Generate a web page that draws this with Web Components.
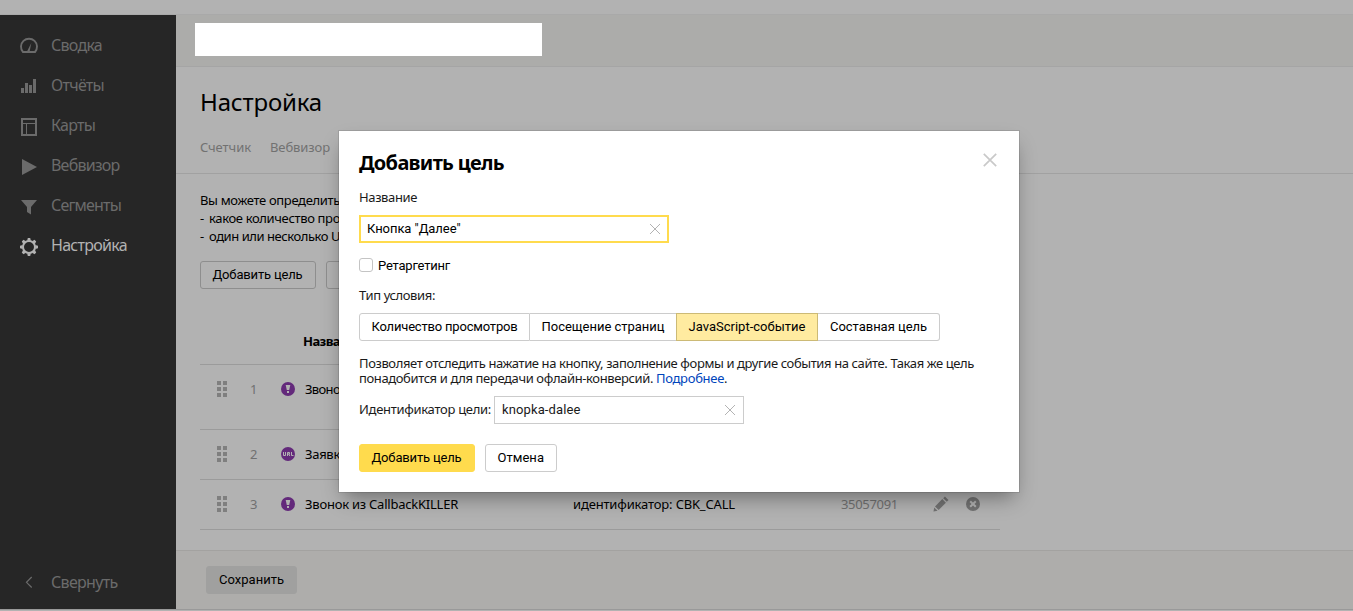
<!DOCTYPE html>
<html lang="ru">
<head>
<meta charset="utf-8">
<title>Настройка</title>
<style>
  body {
    margin: 0;
    background: #b2b2b2;
    font: 13px/18px "Noto Sans", sans-serif;
    color: #000;
    overflow: hidden;
  }
</style>
</head>
<body>
<metrika-app>
  <side-menu slot="menu">
    <side-item icon="gauge"><ui-text w="51">Сводка</ui-text></side-item>
    <side-item icon="bars"><ui-text w="53">Отчёты</ui-text></side-item>
    <side-item icon="layout"><ui-text w="44">Карты</ui-text></side-item>
    <side-item icon="play"><ui-text w="68.5">Вебвизор</ui-text></side-item>
    <side-item icon="funnel"><ui-text w="70">Сегменты</ui-text></side-item>
    <side-item icon="gear" active><ui-text w="76">Настройка</ui-text></side-item>
    <side-item slot="bottom" icon="chevron"><ui-text w="66.5">Свернуть</ui-text></side-item>
  </side-menu>
  <settings-page></settings-page>
  <goal-dialog slot="dialog"></goal-dialog>
</metrika-app>

<script>
const icons = {
  gauge: '<svg width="20" height="20"><path d="M4 16 H16 A8 8 0 1 0 4 16 Z" fill="none" stroke="currentColor" stroke-width="1.9"/><path d="M12.3 7 L10.6 15.5 H8 Z" fill="currentColor"/></svg>',
  bars: '<svg width="20" height="20" fill="currentColor"><path d="M2 12h3v5H2zM6 7h3v10H6zM10 9h3v8h-3zM14 3h3v14h-3z"/></svg>',
  layout: '<svg width="20" height="20"><path d="M3 3h14v16H3z" fill="none" stroke="currentColor" stroke-width="2"/><path d="M3 7.5h14M7.5 7v12" stroke="currentColor" fill="none"/></svg>',
  play: '<svg width="20" height="20"><path d="M3 3 L18 11 L3 19 Z" fill="currentColor"/></svg>',
  funnel: '<svg width="20" height="20"><path d="M2 4 H18 L12 11 V18.5 L8 16 V11 Z" fill="currentColor"/></svg>',
  gear: '<svg width="20" height="20" viewBox="-10 -11 20 20"><circle r="6" fill="none" stroke="currentColor" stroke-width="2"/><g fill="currentColor">' +
    [0, 45, 90, 135, 180, 225, 270, 315].map(a => `<path transform="rotate(${a})" d="M-1.9 -6.3 L-1.2 -9 H1.2 L1.9 -6.3 Z"/>`).join("") + '</g></svg>',
  chevron: '<svg width="20" height="20"><path d="M12.7 4 L7.5 9.3 L12.7 14.5" fill="none" stroke="currentColor" stroke-width="1.2"/></svg>',
  event: '<svg width="14" height="14"><circle cx="7" cy="7" r="7" fill="#63297b"/><path d="M4.7 3h4.6L8.2 8H5.8zM6 9h2v2H6z" fill="#b2b2b2"/></svg>',
  url: '<svg width="14" height="14"><circle cx="7" cy="7" r="7" fill="#63297b"/><path d="M2.5 5v3.5h2V5M6.5 9V5.5h2V7h-2M7.8 7L8.8 9M10.5 5v3.5h2" fill="none" stroke="#b2b2b2"/></svg>',
  drag: '<svg width="10" height="16" fill="#7f7f7f"><path d="M0 0h4v4H0zM6 0h4v4H6zM0 6h4v4H0zM6 6h4v4H6zM0 12h4v4H0zM6 12h4v4H6z"/></svg>',
  pencil: '<svg width="16" height="16" fill="#727272"><path d="M10.2 2.2 L11.9 .5 L15.5 4.1 L13.8 5.8 Z"/><path d="M9.3 3.1 L12.9 6.7 L5.6 14 L2 10.4 Z"/><path d="M1.2 11.4 L4.6 14.8 L.5 15.4 Z"/></svg>',
  remove: '<svg width="14" height="14"><circle cx="7" cy="7" r="7" fill="#727272"/><path d="M4.2 4.2l5.6 5.6M9.8 4.2l-5.6 5.6" stroke="#b2b2b2" stroke-width="2"/></svg>',
  clear: '<svg width="12" height="12"><path d="M1 1l10 10M11 1L1 11" stroke="#b3b3b3"/></svg>',
  close: '<svg width="14" height="14"><path d="M.8 .8l12.4 12.4M13.2 .8L.8 13.2" stroke="#c9c9c9" stroke-width="1.7"/></svg>'
}

class MetrikaApp extends HTMLElement {
  constructor() {
    super()
    this.attachShadow({ mode: "open" })
    this.shadowRoot.innerHTML = `
      <style>
        :host {
          display: flex;
          flex-direction: column;
          height: 611px;
          box-sizing: border-box;
          position: relative;
        }
        .strip { height: 14px; border-bottom: 1px solid #a9a9a9; }
        .body { display: flex; height: 594px; }
        .end { height: 1px; background: #999; }
      </style>
      <div class="strip"></div>
      <div class="body"><slot name="menu"></slot><slot></slot></div>
      <div class="end"></div>
      <slot name="dialog"></slot>
    `
  }
}

class SideMenu extends HTMLElement {
  constructor() {
    super()
    this.attachShadow({ mode: "open" })
    this.shadowRoot.innerHTML = `
      <style>
        :host {
          display: flex;
          flex-direction: column;
          flex: none;
          width: 176px;
          box-sizing: border-box;
          padding: 11px 0 6px;
          background: #262626;
        }
        .space { flex: 1; }
      </style>
      <slot></slot>
      <div class="space"></div>
      <slot name="bottom"></slot>
    `
  }
}

class SideItem extends HTMLElement {
  constructor() {
    super()
    this.attachShadow({ mode: "open" })
    this.shadowRoot.innerHTML = `
      <style>
        :host {
          display: flex;
          align-items: center;
          height: 40px;
          padding-left: 19px;
          gap: 12px;
          font-size: 16px;
          line-height: 38px;
          color: #6b6b6b;
        }
        :host([active]) { color: #b2b2b2; }
        ::slotted(ui-text) { margin-bottom: 2px; }
        svg { display: block; }
      </style>
      ${icons[this.getAttribute("icon")]}
      <slot></slot>
    `
  }
}

class UiButton extends HTMLElement {
  constructor() {
    super()
    this.attachShadow({ mode: "open" })
    this.shadowRoot.innerHTML = `
      <style>
        :host {
          display: block;
          box-sizing: border-box;
          height: 28px;
          padding: 0 11.5px;
          border: 1px solid #ccc;
          border-radius: 3px;
          font: 13px/26px Roboto, sans-serif;
          white-space: nowrap;
        }
        :host([kind="dim"]) { border-color: #8e8e8e; }
        :host([kind="save"]) { padding-left: 12px; border-color: #a0a09f; background: #a0a09f; }
        :host([kind="action"]) { border-color: #ffdb4d; background: #ffdb4d; }
      </style>
      <slot></slot>
    `
  }
}

class UiInput extends HTMLElement {
  constructor() {
    super()
    this.attachShadow({ mode: "open" })
    this.shadowRoot.innerHTML = `
      <style>
        :host {
          display: flex;
          align-items: center;
          justify-content: space-between;
          box-sizing: border-box;
          height: 28px;
          padding: 0 7px;
          border: 1px solid #ccc;
          background: #fff;
          font: 13px/24px Roboto, sans-serif;
        }
        :host([focused]) { border: 2px solid #ffdb4d; padding: 0 6px; }
        svg { display: block; }
      </style>
      <slot></slot>
      ${icons.clear}
    `
  }
}

class GoalRow extends HTMLElement {
  constructor() {
    super()
    this.attachShadow({ mode: "open" })
    this.shadowRoot.innerHTML = `
      <style>
        :host {
          display: grid;
          grid-template-columns: 33px 31px 24px 268px 268px 92px 33px 1fr;
          grid-template-rows: 48px;
          align-items: center;
          box-sizing: border-box;
          height: 50px;
          padding-left: 17px;
          border-bottom: 1px solid #9b9b9b;
        }
        :host([tall]) { height: 65px; }
        svg { display: block; }
        .num, .id { color: #707070; }
      </style>
      ${icons.drag}
      <span class="num">${this.getAttribute("num")}</span>
      ${icons[this.getAttribute("type")]}
      <slot></slot>
      <slot name="cond"></slot>
      <span class="id"><slot name="id"></slot></span>
      ${this.hasAttribute("tools") ? icons.pencil + icons.remove : ""}
    `
  }
}

class SettingsPage extends HTMLElement {
  constructor() {
    super()
    this.attachShadow({ mode: "open" })
    this.shadowRoot.innerHTML = `
      <style>
        :host { display: flex; flex-direction: column; flex: 1; }
        header {
          padding: 8px 19px 0;
          box-sizing: border-box;
          border-bottom: 1px solid #a5a5a5;
          height: 52px;
          background: #acacaa;
        }
        .counter { width: 347px; height: 33px; background: #fff; }
        .top {
          box-sizing: border-box;
          height: 107px;
          padding: 19px 24px 0;
          border-bottom: 1px solid #a1a1a1;
        }
        h1 { margin: 0; font-size: 24px; font-weight: 400; line-height: 32px; }
        nav { display: flex; gap: 19px; margin-top: 19px; line-height: 20px; color: #717171; }
        .content { flex: 1; padding: 17px 24px 0; }
        .dash { display: inline-block; width: 9px; }
        .buttons { display: flex; gap: 10px; margin-top: 16px; }
        .table { width: 800px; margin-top: 32px; }
        .head {
          box-sizing: border-box;
          height: 44px;
          padding: 11px 0 0 103px;
          border-bottom: 1px solid #9b9b9b;
          font-weight: 700;
        }
        footer {
          display: flex;
          box-sizing: border-box;
          height: 59px;
          padding: 15px 30px 0;
          border-top: 1px solid #a3a2a0;
          background: #aeadab;
        }
      </style>
      <header><div class="counter"></div></header>
      <div class="top">
        <h1><ui-text w="122">Настройка</ui-text></h1>
        <nav><ui-text w="51">Счетчик</ui-text><ui-text w="60">Вебвизор</ui-text></nav>
      </div>
      <div class="content">
        <div><ui-text w="140">Вы можете определить</ui-text></div>
        <div><span class="dash">-</span><ui-text w="131">какое количество про</ui-text></div>
        <div><span class="dash">-</span><ui-text w="131">один или несколько U</ui-text></div>
        <div class="buttons">
          <ui-button kind="dim" style="width:116px"><ui-text w="90">Добавить цель</ui-text></ui-button>
          <ui-button kind="dim" style="width:116px"></ui-button>
        </div>
        <div class="table">
          <div class="head"><ui-text w="37">Назва</ui-text></div>
          <goal-row num="1" type="event" tall><ui-text w="35">Звоно</ui-text></goal-row>
          <goal-row num="2" type="url"><ui-text w="35">Заявк</ui-text></goal-row>
          <goal-row num="3" type="event" tools>
            <ui-text w="153">Звонок из CallbackKILLER</ui-text>
            <ui-text slot="cond" w="162">идентификатор: CBK_CALL</ui-text>
            <ui-text slot="id" w="57">35057091</ui-text>
          </goal-row>
        </div>
      </div>
      <footer><ui-button kind="save" style="width:91px"><ui-text w="65">Сохранить</ui-text></ui-button></footer>
    `
  }
}

class GoalDialog extends HTMLElement {
  constructor() {
    super()
    this.attachShadow({ mode: "open" })
    this.shadowRoot.innerHTML = `
      <style>
        :host {
          display: block;
          position: absolute;
          left: 339px;
          top: 131px;
          width: 680px;
          height: 361px;
          box-sizing: border-box;
          padding: 18px 20px 0;
          background: #fff;
          box-shadow: 0 0 0 1px rgba(0, 0, 0, .1), 0 10px 20px -5px rgba(0, 0, 0, .4);
        }
        svg { display: block; }
        .title { display: flex; justify-content: space-between; height: 28px; }
        .title svg { margin: 4px 2px 0 0; }
        h2 { margin: 0; font-size: 20px; line-height: 28px; }
        .label { margin-top: 11px; color: #1a1a1a; }
        .name { width: 310px; margin-top: 9px; }
        .check { display: flex; align-items: center; gap: 5px; margin-top: 13px; font-family: Roboto, sans-serif; }
        .check ui-text { padding-top: 1px; margin-bottom: -1px; }
        .box { box-sizing: border-box; width: 14px; height: 14px; border: 1px solid #c4c4c4; border-radius: 3px; }
        .kinds {
          display: grid;
          grid-template-columns: 171px 147px 141px 122px;
          width: 581px;
          height: 28px;
          box-sizing: border-box;
          margin-top: 9px;
          font: 13px/26px Roboto, sans-serif;
          text-align: center;
        }
        .kinds div { border: 1px solid #ccc; border-left-width: 0; }
        .kinds div:first-child { border-left-width: 1px; border-radius: 3px 0 0 3px; }
        .kinds div:last-child { border-radius: 0 3px 3px 0; }
        .kinds .on { margin-left: -1px; border: 1px solid #ccba76; background: #ffeba0; }
        .hint { margin-top: 15px; line-height: 15px; color: #1a1a1a; }
        a { color: #04b; text-decoration: none; }
        .ident { display: flex; gap: 3px; margin-top: 10px; line-height: 27px; color: #1a1a1a; }
        .ident ui-input { width: 250px; }
        .actions { display: flex; gap: 10px; margin-top: 20px; }
      </style>
      <div class="title"><h2><ui-text w="145">Добавить цель</ui-text></h2>${icons.close}</div>
      <div class="label"><ui-text w="58">Название</ui-text></div>
      <ui-input class="name" focused><ui-text w="93.5">Кнопка "Далее"</ui-text></ui-input>
      <div class="check"><span class="box"></span><ui-text w="72">Ретаргетинг</ui-text></div>
      <div class="label" style="margin-top:12px"><ui-text w="76">Тип условия:</ui-text></div>
      <div class="kinds">
        <div><ui-text w="146">Количество просмотров</ui-text></div>
        <div><ui-text w="123">Посещение страниц</ui-text></div>
        <div class="on"><ui-text w="117">JavaScript-событие</ui-text></div>
        <div><ui-text w="97">Составная цель</ui-text></div>
      </div>
      <div class="hint">
        <div><ui-text w="615">Позволяет отследить нажатие на кнопку, заполнение формы и другие события на сайте. Такая же цель</ui-text></div>
        <div><ui-text w="297">понадобится и для передачи офлайн-конверсий. </ui-text><a><ui-text w="68">Подробнее</ui-text></a>.</div>
      </div>
      <div class="ident"><ui-text w="132">Идентификатор цели:</ui-text><ui-input><ui-text w="78.5">knopka-dalee</ui-text></ui-input></div>
      <div class="actions">
        <ui-button kind="action" style="width:116px"><ui-text w="90">Добавить цель</ui-text></ui-button>
        <ui-button style="width:72px"><ui-text w="46.5">Отмена</ui-text></ui-button>
      </div>
    `
  }
}

// Text run tracked to a given width
class UiText extends HTMLElement {
  constructor() {
    super()
    this.attachShadow({ mode: "open" })
    this.shadowRoot.innerHTML = `<style>:host { display: inline-block; white-space: pre; }</style><slot></slot>`
  }

  connectedCallback() {
    const width = Number(this.getAttribute("w"))
    const range = document.createRange()
    range.selectNodeContents(this)
    const natural = range.getBoundingClientRect().width
    this.style.letterSpacing = (width - natural) / this.textContent.length + "px"
  }
}

customElements.define("metrika-app", MetrikaApp)
customElements.define("side-menu", SideMenu)
customElements.define("side-item", SideItem)
customElements.define("ui-button", UiButton)
customElements.define("ui-input", UiInput)
customElements.define("goal-row", GoalRow)
customElements.define("settings-page", SettingsPage)
customElements.define("goal-dialog", GoalDialog)
// last, so that every run already has its final font when measured
customElements.define("ui-text", UiText)
</script>
</body>
</html>
